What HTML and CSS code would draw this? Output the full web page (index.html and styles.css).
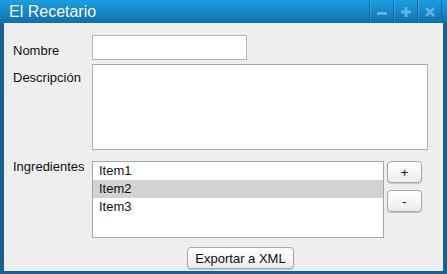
FILE: index.html
```html
<!DOCTYPE html>
<html lang="es">
<head>
    <meta charset="UTF-8">
    <title>El Recetario</title>
    <link rel="stylesheet" href="styles.css">
</head>
<body>
    <div class="window">
        <header class="titlebar">
            <span class="title">El Recetario</span>
            <div class="controls">
                <span class="ctrl">
                    <svg width="12" height="12" viewBox="0 0 12 12"><rect x="1" y="6" width="10" height="3" fill="#5cb4e4"/></svg>
                </span>
                <span class="ctrl">
                    <svg width="12" height="12" viewBox="0 0 12 12"><path d="M4.5 1h3v3.5h3.5v3h-3.5v3.5h-3v-3.5h-3.5v-3h3.5z" fill="#5cb4e4"/></svg>
                </span>
                <span class="ctrl">
                    <svg width="12" height="12" viewBox="0 0 12 12"><path d="M2 2l8 8M10 2l-8 8" stroke="#5cb4e4" stroke-width="2.6"/></svg>
                </span>
            </div>
        </header>
        <main class="content">
            <label class="lbl lbl-nombre" for="nombre">Nombre</label>
            <input class="field" type="text" id="nombre">

            <label class="lbl lbl-desc" for="desc">Descripción</label>
            <textarea class="area" id="desc"></textarea>

            <span class="lbl lbl-ingr">Ingredientes</span>
            <div class="ingr">
                <ul class="list">
                    <li>Item1</li>
                    <li class="selected">Item2</li>
                    <li>Item3</li>
                </ul>
                <div class="side">
                    <button class="btn small">+</button>
                    <button class="btn small">-</button>
                </div>
            </div>

            <div class="footer">
                <button class="btn export">Exportar a XML</button>
            </div>
        </main>
    </div>
</body>
</html>
```

FILE: styles.css
```css
* {
    box-sizing: border-box;
}
html, body {
    margin: 0;
    padding: 0;
}
body {
    font-family: "Liberation Sans", Arial, sans-serif;
    font-size: 13px;
    color: #111;
    background: #17628f;
}
.window {
    width: 447px;
    height: 274px;
    display: flex;
    flex-direction: column;
    background: #17628f;
    padding: 0 4px 3px 4px;
}
.titlebar {
    height: 23px;
    margin: 0 -4px;
    display: flex;
    align-items: stretch;
    justify-content: space-between;
    background: linear-gradient(#1c9fe2, #1587c8 55%, #0f6fa7);
}
.title {
    color: #fff;
    font-size: 16px;
    line-height: 23px;
    padding-left: 9px;
    text-shadow: 0 0 1px rgba(0, 60, 100, 0.5);
}
.controls {
    display: flex;
    margin-right: 5px;
    border-left: 1px solid #0d6aa2;
}
.ctrl {
    width: 24px;
    display: flex;
    align-items: center;
    justify-content: center;
    border-right: 1px solid #0d6aa2;
    box-shadow: inset 1px 0 0 rgba(255, 255, 255, 0.12);
}
.ctrl svg {
    display: block;
    margin-top: 1px;
}
.content {
    flex: 1;
    background: #eeeeee;
    display: grid;
    grid-template-columns: 79px 1fr;
    align-content: start;
    padding: 12px 15px 0 9px;
}
.lbl {
    line-height: 16px;
}
.lbl-nombre {
    padding-top: 8px;
}
.lbl-desc {
    padding-top: 6px;
    margin-top: 4px;
}
.lbl-ingr {
    margin-top: 9px;
}
.field {
    width: 155px;
    height: 25px;
    border: 1px solid #b4b4b4;
    background: #fff;
    margin: 0;
}
.area {
    width: 336px;
    height: 86px;
    margin: 4px 0 0 0;
    border: 1px solid #b0b0b0;
    border-top-color: #a4a4a4;
    background: #fff;
    resize: none;
}
.ingr {
    display: flex;
    gap: 3px;
    margin-top: 11px;
}
.list {
    list-style: none;
    margin: 0;
    padding: 0;
    width: 292px;
    height: 77px;
    border: 1px solid #a6a6a6;
    background: #fff;
}
.list li {
    height: 18px;
    line-height: 18px;
    padding-left: 6px;
}
.list li.selected {
    background: #d3d3d3;
}
.side {
    display: flex;
    flex-direction: column;
    gap: 7px;
}
.btn {
    font-family: "Liberation Sans", Arial, sans-serif;
    font-size: 13px;
    color: #111;
    border: 1px solid #a8a8a8;
    border-radius: 4px;
    background: linear-gradient(#ffffff, #f4f4f4 60%, #ebebeb);
    box-shadow: 0 1px 1px rgba(0, 0, 0, 0.18);
    padding: 0;
    margin: 0;
}
.btn.small {
    width: 35px;
    height: 22px;
}
.footer {
    grid-column: 2;
    padding: 9px 0 0 95px;
}
.btn.export {
    width: 107px;
    height: 22px;
}
```
